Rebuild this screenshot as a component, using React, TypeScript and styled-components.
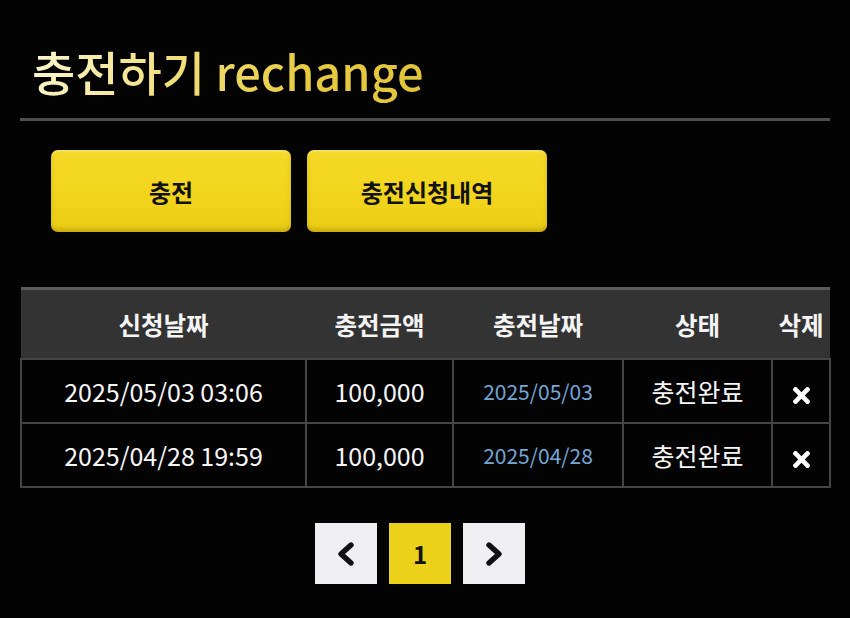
import React from "react";
import styled, { createGlobalStyle } from "styled-components";
import { FaTimes } from "react-icons/fa";

const GlobalStyle = createGlobalStyle`
  html, body {
    margin: 0;
    padding: 0;
    background: #030303;
  }
  body {
    font-family: "Noto Sans CJK KR", "Noto Sans", sans-serif;
    color: #fff;
  }
`;

const Page = styled.div`
  padding: 0 20px 34px 20px;
  display: flex;
  flex-direction: column;
`;

const TitleBar = styled.div`
  padding: 39px 0 15px 12px;
  border-bottom: 3px solid #4e4e4e;
`;

const Title = styled.h1`
  margin: 0;
  font-size: 47px;
  line-height: 64px;
  font-weight: 500;
  display: inline-block;
  background: linear-gradient(100deg, #fbf6d0 0%, #f0dd73 40%, #e6cb40 70%, #e1c33a 100%);
  -webkit-background-clip: text;
  background-clip: text;
  color: transparent;
`;

const ButtonRow = styled.div`
  display: flex;
  gap: 16px;
  padding: 29px 0 0 31px;
`;

const ActionButton = styled.button`
  width: 240px;
  height: 82px;
  border: none;
  border-radius: 7px;
  background: linear-gradient(180deg, #f5da28 0%, #f1d41b 60%, #eacc15 100%);
  box-shadow: inset 0 -3px 4px rgba(120, 90, 0, 0.3), inset 0 2px 2px rgba(255, 250, 200, 0.35);
  font-family: "Noto Sans CJK KR", sans-serif;
  font-size: 24px;
  font-weight: 700;
  color: #111;
  cursor: pointer;
`;

const Table = styled.table`
  margin-top: 55px;
  width: 809px;
  border-collapse: collapse;
  table-layout: fixed;
  border-top: 3px solid #5c5c5c;
`;

const HeadCell = styled.th<{ $w: number }>`
  width: ${(p) => p.$w}px;
  height: 68px;
  padding: 0;
  background: #333333;
  font-size: 24.5px;
  font-weight: 700;
  color: #f4f4f4;
  text-align: center;
`;

const Cell = styled.td<{ $tone?: "date" }>`
  height: 62px;
  padding: 0;
  border: 2px solid #454545;
  background: #030303;
  text-align: center;
  font-size: ${(p) => (p.$tone === "date" ? "21px" : "25px")};
  color: ${(p) => (p.$tone === "date" ? "#76a6d6" : "#f6f6f6")};
`;

const DeleteIcon = styled(FaTimes)`
  font-size: 25px;
  color: #fff;
  vertical-align: middle;
`;

const Pager = styled.div`
  display: flex;
  justify-content: center;
  gap: 12px;
  margin-top: 35px;
  padding-right: 10px;
`;

const PageBox = styled.div<{ $active?: boolean }>`
  width: 62px;
  height: 61px;
  display: flex;
  align-items: center;
  justify-content: center;
  background: ${(p) => (p.$active ? "#ecd11b" : "#efeef1")};
  color: #111;
  font-size: 24px;
  font-weight: 700;
`;

const Chevron = ({ dir }: { dir: "left" | "right" }) => (
  <svg width="22" height="28" viewBox="0 0 22 28">
    <polyline
      points={dir === "left" ? "16,5 6,14 16,23" : "6,5 16,14 6,23"}
      fill="none"
      stroke="#111"
      strokeWidth="5.4"
      strokeLinecap="round"
      strokeLinejoin="round"
    />
  </svg>
);

const rows = [
  { requested: "2025/05/03 03:06", amount: "100,000", charged: "2025/05/03", status: "충전완료" },
  { requested: "2025/04/28 19:59", amount: "100,000", charged: "2025/04/28", status: "충전완료" },
];

const columns = [
  { label: "신청날짜", w: 285 },
  { label: "충전금액", w: 147 },
  { label: "충전날짜", w: 170 },
  { label: "상태", w: 149 },
  { label: "삭제", w: 58 },
];

export default function App() {
  return (
    <>
      <GlobalStyle />
      <Page>
        <TitleBar>
          <Title>충전하기 rechange</Title>
        </TitleBar>
        <ButtonRow>
          <ActionButton>충전</ActionButton>
          <ActionButton>충전신청내역</ActionButton>
        </ButtonRow>
        <Table>
          <thead>
            <tr>
              {columns.map((c) => (
                <HeadCell key={c.label} $w={c.w}>
                  {c.label}
                </HeadCell>
              ))}
            </tr>
          </thead>
          <tbody>
            {rows.map((r) => (
              <tr key={r.requested}>
                <Cell>{r.requested}</Cell>
                <Cell>{r.amount}</Cell>
                <Cell $tone="date">{r.charged}</Cell>
                <Cell>{r.status}</Cell>
                <Cell>
                  <DeleteIcon />
                </Cell>
              </tr>
            ))}
          </tbody>
        </Table>
        <Pager>
          <PageBox>
            <Chevron dir="left" />
          </PageBox>
          <PageBox $active>1</PageBox>
          <PageBox>
            <Chevron dir="right" />
          </PageBox>
        </Pager>
      </Page>
    </>
  );
}
